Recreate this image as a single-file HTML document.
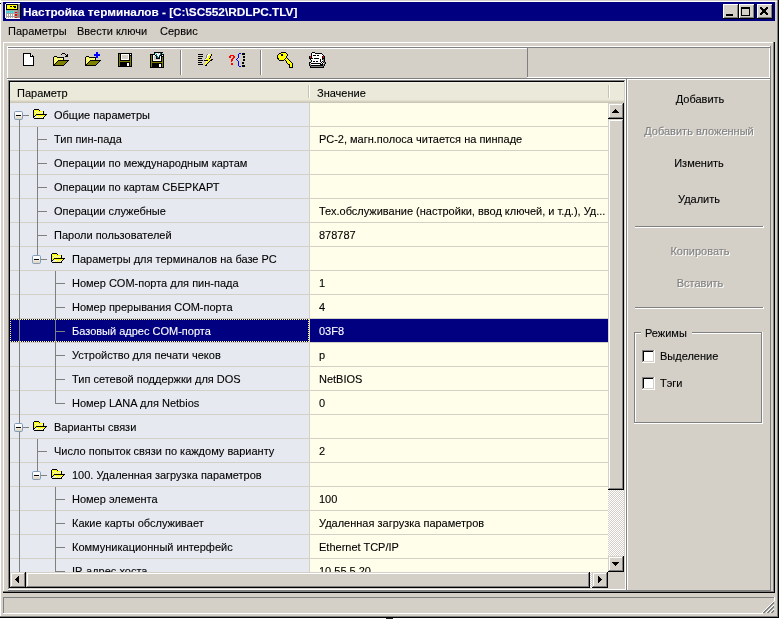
<!DOCTYPE html>
<html><head><meta charset="utf-8">
<style>
*{margin:0;padding:0;box-sizing:border-box}
html,body{width:781px;height:619px;overflow:hidden;background:#fff}
body{position:relative;font-family:"Liberation Sans",sans-serif;font-size:11px;color:#000;will-change:transform}
.a{position:absolute}
.t{position:absolute;white-space:nowrap;line-height:15px;font-size:11px;-webkit-text-stroke:0.1px currentColor}
svg{position:absolute;overflow:visible}
</style></head><body>

<div class="a" style="left:0px;top:0px;width:779px;height:618px;background:#d4d0c8;"></div>
<div class="a" style="left:0px;top:0px;width:1px;height:618px;background:#fff;"></div>
<div class="a" style="left:1px;top:1px;width:776px;height:1px;background:#fff;"></div>
<div class="a" style="left:777px;top:0px;width:1px;height:617px;background:#808080;"></div>
<div class="a" style="left:778px;top:0px;width:1px;height:618px;background:#000;"></div>
<div class="a" style="left:0px;top:616px;width:778px;height:1px;background:#808080;"></div>
<div class="a" style="left:0px;top:617px;width:779px;height:1px;background:#000;"></div>
<div class="a" style="left:3px;top:2px;width:772px;height:19px;background:#000080;"></div>
<svg style="left:5px;top:3px" width="16" height="16" shape-rendering="crispEdges"><rect x="1" y="0" width="14" height="1" fill="#ffffff"/><rect x="0" y="1" width="1" height="1" fill="#ffffff"/><rect x="1" y="1" width="12" height="1" fill="#000000"/><rect x="13" y="1" width="2" height="1" fill="#8c8c8c"/><rect x="15" y="1" width="1" height="1" fill="#000000"/><rect x="0" y="2" width="1" height="1" fill="#ffffff"/><rect x="1" y="2" width="1" height="1" fill="#000000"/><rect x="2" y="2" width="10" height="1" fill="#ffff00"/><rect x="12" y="2" width="1" height="1" fill="#000000"/><rect x="13" y="2" width="2" height="1" fill="#8c8c8c"/><rect x="15" y="2" width="1" height="1" fill="#000000"/><rect x="0" y="3" width="1" height="1" fill="#ffffff"/><rect x="1" y="3" width="1" height="1" fill="#000000"/><rect x="2" y="3" width="3" height="1" fill="#ffff00"/><rect x="5" y="3" width="2" height="1" fill="#000000"/><rect x="7" y="3" width="1" height="1" fill="#ffff00"/><rect x="8" y="3" width="3" height="1" fill="#000000"/><rect x="11" y="3" width="1" height="1" fill="#ffff00"/><rect x="12" y="3" width="1" height="1" fill="#000000"/><rect x="13" y="3" width="2" height="1" fill="#8c8c8c"/><rect x="15" y="3" width="1" height="1" fill="#000000"/><rect x="0" y="4" width="1" height="1" fill="#ffffff"/><rect x="1" y="4" width="1" height="1" fill="#000000"/><rect x="2" y="4" width="7" height="1" fill="#ffff00"/><rect x="9" y="4" width="2" height="1" fill="#000000"/><rect x="11" y="4" width="1" height="1" fill="#ffff00"/><rect x="12" y="4" width="1" height="1" fill="#000000"/><rect x="13" y="4" width="2" height="1" fill="#8c8c8c"/><rect x="15" y="4" width="1" height="1" fill="#000000"/><rect x="0" y="5" width="1" height="1" fill="#ffffff"/><rect x="1" y="5" width="1" height="1" fill="#000000"/><rect x="2" y="5" width="10" height="1" fill="#ffff00"/><rect x="12" y="5" width="1" height="1" fill="#000000"/><rect x="13" y="5" width="2" height="1" fill="#8c8c8c"/><rect x="15" y="5" width="1" height="1" fill="#000000"/><rect x="0" y="6" width="1" height="1" fill="#ffffff"/><rect x="1" y="6" width="12" height="1" fill="#000000"/><rect x="13" y="6" width="2" height="1" fill="#8c8c8c"/><rect x="15" y="6" width="1" height="1" fill="#000000"/><rect x="0" y="7" width="1" height="1" fill="#ffffff"/><rect x="1" y="7" width="11" height="1" fill="#a4a4a4"/><rect x="12" y="7" width="3" height="1" fill="#8c8c8c"/><rect x="15" y="7" width="1" height="1" fill="#000000"/><rect x="0" y="8" width="1" height="1" fill="#ffffff"/><rect x="1" y="8" width="1" height="1" fill="#a4a4a4"/><rect x="2" y="8" width="1" height="1" fill="#00ffff"/><rect x="3" y="8" width="1" height="1" fill="#a4a4a4"/><rect x="4" y="8" width="1" height="1" fill="#00ffff"/><rect x="5" y="8" width="1" height="1" fill="#a4a4a4"/><rect x="6" y="8" width="1" height="1" fill="#00ffff"/><rect x="7" y="8" width="1" height="1" fill="#a4a4a4"/><rect x="8" y="8" width="1" height="1" fill="#00ffff"/><rect x="9" y="8" width="3" height="1" fill="#a4a4a4"/><rect x="12" y="8" width="3" height="1" fill="#8c8c8c"/><rect x="15" y="8" width="1" height="1" fill="#000000"/><rect x="0" y="9" width="1" height="1" fill="#ffffff"/><rect x="1" y="9" width="1" height="1" fill="#a4a4a4"/><rect x="2" y="9" width="1" height="1" fill="#00ffff"/><rect x="3" y="9" width="1" height="1" fill="#a4a4a4"/><rect x="4" y="9" width="1" height="1" fill="#00ffff"/><rect x="5" y="9" width="1" height="1" fill="#a4a4a4"/><rect x="6" y="9" width="1" height="1" fill="#00ffff"/><rect x="7" y="9" width="1" height="1" fill="#a4a4a4"/><rect x="8" y="9" width="1" height="1" fill="#00ffff"/><rect x="9" y="9" width="1" height="1" fill="#a4a4a4"/><rect x="10" y="9" width="2" height="1" fill="#ff0000"/><rect x="12" y="9" width="3" height="1" fill="#8c8c8c"/><rect x="15" y="9" width="1" height="1" fill="#000000"/><rect x="0" y="10" width="1" height="1" fill="#ffffff"/><rect x="1" y="10" width="11" height="1" fill="#a4a4a4"/><rect x="12" y="10" width="3" height="1" fill="#8c8c8c"/><rect x="15" y="10" width="1" height="1" fill="#000000"/><rect x="0" y="11" width="1" height="1" fill="#ffffff"/><rect x="1" y="11" width="1" height="1" fill="#a4a4a4"/><rect x="2" y="11" width="1" height="1" fill="#ffffff"/><rect x="3" y="11" width="1" height="1" fill="#a4a4a4"/><rect x="4" y="11" width="1" height="1" fill="#ffffff"/><rect x="5" y="11" width="1" height="1" fill="#a4a4a4"/><rect x="6" y="11" width="1" height="1" fill="#ffffff"/><rect x="7" y="11" width="1" height="1" fill="#a4a4a4"/><rect x="8" y="11" width="1" height="1" fill="#ffffff"/><rect x="9" y="11" width="1" height="1" fill="#a4a4a4"/><rect x="10" y="11" width="2" height="1" fill="#ff0000"/><rect x="12" y="11" width="3" height="1" fill="#8c8c8c"/><rect x="15" y="11" width="1" height="1" fill="#000000"/><rect x="0" y="12" width="1" height="1" fill="#ffffff"/><rect x="1" y="12" width="1" height="1" fill="#a4a4a4"/><rect x="2" y="12" width="1" height="1" fill="#ffffff"/><rect x="3" y="12" width="1" height="1" fill="#a4a4a4"/><rect x="4" y="12" width="1" height="1" fill="#ffffff"/><rect x="5" y="12" width="1" height="1" fill="#a4a4a4"/><rect x="6" y="12" width="1" height="1" fill="#ffffff"/><rect x="7" y="12" width="1" height="1" fill="#a4a4a4"/><rect x="8" y="12" width="1" height="1" fill="#ffffff"/><rect x="9" y="12" width="1" height="1" fill="#a4a4a4"/><rect x="10" y="12" width="2" height="1" fill="#ff0000"/><rect x="12" y="12" width="3" height="1" fill="#8c8c8c"/><rect x="15" y="12" width="1" height="1" fill="#000000"/><rect x="0" y="13" width="1" height="1" fill="#ffffff"/><rect x="1" y="13" width="11" height="1" fill="#a4a4a4"/><rect x="12" y="13" width="3" height="1" fill="#8c8c8c"/><rect x="15" y="13" width="1" height="1" fill="#000000"/><rect x="0" y="14" width="1" height="1" fill="#ffffff"/><rect x="1" y="14" width="1" height="1" fill="#a4a4a4"/><rect x="2" y="14" width="1" height="1" fill="#ffffff"/><rect x="3" y="14" width="1" height="1" fill="#a4a4a4"/><rect x="4" y="14" width="1" height="1" fill="#ffffff"/><rect x="5" y="14" width="1" height="1" fill="#a4a4a4"/><rect x="6" y="14" width="1" height="1" fill="#ffffff"/><rect x="7" y="14" width="1" height="1" fill="#a4a4a4"/><rect x="8" y="14" width="1" height="1" fill="#ffffff"/><rect x="9" y="14" width="1" height="1" fill="#a4a4a4"/><rect x="10" y="14" width="2" height="1" fill="#ff0000"/><rect x="12" y="14" width="3" height="1" fill="#8c8c8c"/><rect x="15" y="14" width="1" height="1" fill="#000000"/><rect x="1" y="15" width="14" height="1" fill="#ffffff"/><rect x="15" y="15" width="1" height="1" fill="#000000"/></svg>
<div class="t" style="left:23px;top:5px;color:#fff;font-weight:bold;font-size:11.8px;">Настройка терминалов - [C:\SC552\RDLPC.TLV]</div>
<div class="a" style="left:723px;top:4px;width:16px;height:15px;background:#d4d0c8;"></div>
<div class="a" style="left:723px;top:4px;width:15px;height:1px;background:#fff;"></div>
<div class="a" style="left:723px;top:4px;width:1px;height:14px;background:#fff;"></div>
<div class="a" style="left:724px;top:5px;width:13px;height:1px;background:#d4d0c8;"></div>
<div class="a" style="left:724px;top:5px;width:1px;height:12px;background:#d4d0c8;"></div>
<div class="a" style="left:723px;top:18px;width:16px;height:1px;background:#000;"></div>
<div class="a" style="left:738px;top:4px;width:1px;height:15px;background:#000;"></div>
<div class="a" style="left:724px;top:17px;width:14px;height:1px;background:#808080;"></div>
<div class="a" style="left:737px;top:5px;width:1px;height:13px;background:#808080;"></div>
<div class="a" style="left:739px;top:4px;width:16px;height:15px;background:#d4d0c8;"></div>
<div class="a" style="left:739px;top:4px;width:15px;height:1px;background:#fff;"></div>
<div class="a" style="left:739px;top:4px;width:1px;height:14px;background:#fff;"></div>
<div class="a" style="left:740px;top:5px;width:13px;height:1px;background:#d4d0c8;"></div>
<div class="a" style="left:740px;top:5px;width:1px;height:12px;background:#d4d0c8;"></div>
<div class="a" style="left:739px;top:18px;width:16px;height:1px;background:#000;"></div>
<div class="a" style="left:754px;top:4px;width:1px;height:15px;background:#000;"></div>
<div class="a" style="left:740px;top:17px;width:14px;height:1px;background:#808080;"></div>
<div class="a" style="left:753px;top:5px;width:1px;height:13px;background:#808080;"></div>
<div class="a" style="left:757px;top:4px;width:16px;height:15px;background:#d4d0c8;"></div>
<div class="a" style="left:757px;top:4px;width:15px;height:1px;background:#fff;"></div>
<div class="a" style="left:757px;top:4px;width:1px;height:14px;background:#fff;"></div>
<div class="a" style="left:758px;top:5px;width:13px;height:1px;background:#d4d0c8;"></div>
<div class="a" style="left:758px;top:5px;width:1px;height:12px;background:#d4d0c8;"></div>
<div class="a" style="left:757px;top:18px;width:16px;height:1px;background:#000;"></div>
<div class="a" style="left:772px;top:4px;width:1px;height:15px;background:#000;"></div>
<div class="a" style="left:758px;top:17px;width:14px;height:1px;background:#808080;"></div>
<div class="a" style="left:771px;top:5px;width:1px;height:13px;background:#808080;"></div>
<div class="a" style="left:726px;top:14px;width:7px;height:2px;background:#000;"></div>
<div class="a" style="left:741px;top:7px;width:9px;height:9px;background:#000;"></div>
<div class="a" style="left:742px;top:9px;width:7px;height:6px;background:#d4d0c8;"></div>
<svg style="left:760px;top:7px" width="8" height="8" shape-rendering="crispEdges"><rect x="0" y="0" width="2" height="1" fill="#000000"/><rect x="6" y="0" width="2" height="1" fill="#000000"/><rect x="0" y="1" width="3" height="1" fill="#000000"/><rect x="5" y="1" width="3" height="1" fill="#000000"/><rect x="1" y="2" width="6" height="1" fill="#000000"/><rect x="2" y="3" width="4" height="1" fill="#000000"/><rect x="2" y="4" width="4" height="1" fill="#000000"/><rect x="1" y="5" width="6" height="1" fill="#000000"/><rect x="0" y="6" width="3" height="1" fill="#000000"/><rect x="5" y="6" width="3" height="1" fill="#000000"/><rect x="0" y="7" width="2" height="1" fill="#000000"/><rect x="6" y="7" width="2" height="1" fill="#000000"/></svg>
<div class="t" style="left:8px;top:24px;">Параметры</div>
<div class="t" style="left:77px;top:24px;">Ввести ключи</div>
<div class="t" style="left:160px;top:24px;">Сервис</div>
<div class="a" style="left:3px;top:42px;width:771px;height:1px;background:#fff;"></div>
<div class="a" style="left:3px;top:42px;width:1px;height:550px;background:#fff;"></div>
<div class="a" style="left:773px;top:42px;width:1px;height:550px;background:#808080;"></div>
<div class="a" style="left:774px;top:42px;width:1px;height:551px;background:#000;"></div>
<div class="a" style="left:3px;top:591px;width:771px;height:1px;background:#808080;"></div>
<div class="a" style="left:3px;top:592px;width:772px;height:1px;background:#000;"></div>
<div class="a" style="left:7px;top:46px;width:763px;height:1px;background:#fff;"></div>
<div class="a" style="left:7px;top:46px;width:1px;height:32px;background:#fff;"></div>
<div class="a" style="left:8px;top:47px;width:762px;height:1px;background:#808080;"></div>
<div class="a" style="left:8px;top:48px;width:519px;height:1px;background:#fff;"></div>
<div class="a" style="left:527px;top:48px;width:1px;height:29px;background:#808080;"></div>
<div class="a" style="left:527px;top:77px;width:243px;height:1px;background:#fff;"></div>
<div class="a" style="left:7px;top:78px;width:763px;height:1px;background:#808080;"></div>
<div class="a" style="left:7px;top:79px;width:763px;height:1px;background:#fff;"></div>
<div class="a" style="left:769px;top:48px;width:1px;height:30px;background:#fff;"></div>
<div class="a" style="left:770px;top:46px;width:1px;height:545px;background:#808080;"></div>
<div class="a" style="left:627px;top:79px;width:1px;height:511px;background:#fff;"></div>
<div class="a" style="left:626px;top:79px;width:1px;height:512px;background:#808080;"></div>
<div class="a" style="left:8px;top:590px;width:763px;height:1px;background:#808080;"></div>
<div class="a" style="left:3px;top:597px;width:771px;height:1px;background:#808080;"></div>
<div class="a" style="left:3px;top:597px;width:1px;height:17px;background:#808080;"></div>
<div class="a" style="left:774px;top:597px;width:1px;height:4px;background:#fff;"></div>
<div class="a" style="left:3px;top:613px;width:760px;height:1px;background:#fff;"></div>
<div class="a" style="left:8px;top:80px;width:618px;height:1px;background:#808080;"></div>
<div class="a" style="left:8px;top:80px;width:1px;height:510px;background:#808080;"></div>
<div class="a" style="left:9px;top:81px;width:616px;height:1px;background:#000;"></div>
<div class="a" style="left:9px;top:81px;width:1px;height:508px;background:#000;"></div>
<div class="a" style="left:624px;top:81px;width:1px;height:508px;background:#d4d0c8;"></div>
<div class="a" style="left:9px;top:588px;width:616px;height:1px;background:#d4d0c8;"></div>
<div class="a" style="left:625px;top:80px;width:1px;height:510px;background:#fff;"></div>
<div class="a" style="left:8px;top:589px;width:618px;height:1px;background:#fff;"></div>
<div class="a" style="left:10px;top:82px;width:614px;height:21px;background:#ebe9da;"></div>
<div class="a" style="left:10px;top:82px;width:614px;height:1px;background:#f3f1e8;"></div>
<div class="a" style="left:10px;top:100px;width:614px;height:1px;background:#e2decd;"></div>
<div class="a" style="left:10px;top:101px;width:614px;height:1px;background:#d6d2c2;"></div>
<div class="a" style="left:10px;top:102px;width:614px;height:1px;background:#cbc7b8;"></div>
<div class="a" style="left:308px;top:85px;width:1px;height:13px;background:#c5c3b0;"></div>
<div class="a" style="left:309px;top:85px;width:1px;height:13px;background:#fff;"></div>
<div class="a" style="left:608px;top:85px;width:1px;height:13px;background:#c5c3b0;"></div>
<div class="a" style="left:609px;top:85px;width:1px;height:13px;background:#fff;"></div>
<div class="t" style="left:17px;top:86px;">Параметр</div>
<div class="t" style="left:317px;top:86px;">Значение</div>
<div class="a" style="left:10px;top:103px;width:299px;height:485px;background:#e6eaf0;"></div>
<div class="a" style="left:309px;top:103px;width:1px;height:485px;background:#d4d0c8;"></div>
<div class="a" style="left:310px;top:103px;width:298px;height:485px;background:#fffeea;"></div>
<div class="a" style="left:10px;top:103px;width:598px;height:469px;overflow:hidden">
<div class="a" style="left:0px;top:23px;width:598px;height:1px;background:#d4d0c8;"></div>
<div class="a" style="left:0px;top:47px;width:598px;height:1px;background:#d4d0c8;"></div>
<div class="a" style="left:0px;top:71px;width:598px;height:1px;background:#d4d0c8;"></div>
<div class="a" style="left:0px;top:95px;width:598px;height:1px;background:#d4d0c8;"></div>
<div class="a" style="left:0px;top:119px;width:598px;height:1px;background:#d4d0c8;"></div>
<div class="a" style="left:0px;top:143px;width:598px;height:1px;background:#d4d0c8;"></div>
<div class="a" style="left:0px;top:167px;width:598px;height:1px;background:#d4d0c8;"></div>
<div class="a" style="left:0px;top:191px;width:598px;height:1px;background:#d4d0c8;"></div>
<div class="a" style="left:0px;top:215px;width:598px;height:1px;background:#d4d0c8;"></div>
<div class="a" style="left:0px;top:239px;width:598px;height:1px;background:#d4d0c8;"></div>
<div class="a" style="left:0px;top:216px;width:299px;height:23px;background:#000080;"></div>
<div class="a" style="left:300px;top:216px;width:298px;height:23px;background:#000080;"></div>
<div class="a" style="left:0px;top:216px;width:299px;height:23px;border:1px dotted #ffff80"></div>
<div class="a" style="left:0px;top:263px;width:598px;height:1px;background:#d4d0c8;"></div>
<div class="a" style="left:0px;top:287px;width:598px;height:1px;background:#d4d0c8;"></div>
<div class="a" style="left:0px;top:311px;width:598px;height:1px;background:#d4d0c8;"></div>
<div class="a" style="left:0px;top:335px;width:598px;height:1px;background:#d4d0c8;"></div>
<div class="a" style="left:0px;top:359px;width:598px;height:1px;background:#d4d0c8;"></div>
<div class="a" style="left:0px;top:383px;width:598px;height:1px;background:#d4d0c8;"></div>
<div class="a" style="left:0px;top:407px;width:598px;height:1px;background:#d4d0c8;"></div>
<div class="a" style="left:0px;top:431px;width:598px;height:1px;background:#d4d0c8;"></div>
<div class="a" style="left:0px;top:455px;width:598px;height:1px;background:#d4d0c8;"></div>
<div class="a" style="left:0px;top:479px;width:598px;height:1px;background:#d4d0c8;"></div>
<div class="a" style="left:9px;top:17px;width:1px;height:481px;background:#808080;"></div>
<div class="a" style="left:27px;top:24px;width:1px;height:128px;background:#808080;"></div>
<div class="a" style="left:45px;top:168px;width:1px;height:133px;background:#808080;"></div>
<div class="a" style="left:27px;top:336px;width:1px;height:32px;background:#808080;"></div>
<div class="a" style="left:45px;top:384px;width:1px;height:114px;background:#808080;"></div>
<div class="a" style="left:13px;top:12px;width:6px;height:1px;background:#808080;"></div>
<svg style="left:4px;top:8px" width="9" height="9"><defs><linearGradient id="g0" x1="0" y1="0" x2="0" y2="1"><stop offset="0.3" stop-color="#fff"/><stop offset="1" stop-color="#d9ccb4"/></linearGradient></defs><rect x="0.5" y="0.5" width="8" height="8" rx="1.2" fill="url(#g0)" stroke="#7f9db9"/><rect x="2" y="4" width="5" height="1" fill="#000"/></svg>
<svg style="left:23px;top:6px" width="14" height="10" shape-rendering="crispEdges"><path d="M1 0h5v1h-5z M0 1h1v8h-1z M6 1h1v1h-1z M7 2h4v1h-4z M10 3h1v2h-1z M3 5h11v1h-11z M13 6h-1v0z" fill="#000"/><path d="M1 1h5v1h4v3h-7v1h-1v1h-1z" fill="#ffff00"/><path d="M3 6h10v-0l-1 1v0l-1 1v1h-8v-0l1-1z" fill="#ffff00"/><path d="M2 6h1v1h-1z M1 7h1v1h-1z M12 6h1v1h-1z M11 7h1v1h-1z M10 8h1v1h-1z M1 9h10v1h-10z" fill="#000"/><path d="M2 2h1v1h-1z M4 2h1v1h-1z M3 3h1v1h-1z M5 3h1v1h-1z M7 3h1v1h-1z M9 3h1v1h-1z M2 4h1v1h-1z M4 4h1v1h-1z M6 4h1v1h-1z M8 4h1v1h-1z M4 7h1v1h-1z M6 7h1v1h-1z M8 7h1v1h-1z M10 7h1v1h-1z M3 8h1v1h-1z M5 8h1v1h-1z M7 8h1v1h-1z M9 8h1v1h-1z" fill="#fff"/></svg>
<div class="t" style="left:44px;top:5px;color:#000">Общие параметры</div>
<div class="a" style="left:27px;top:36px;width:10px;height:1px;background:#808080;"></div>
<div class="t" style="left:44px;top:29px;color:#000">Тип пин-пада</div>
<div class="t" style="left:309px;top:29px;color:#000">РС-2, магн.полоса читается на пинпаде</div>
<div class="a" style="left:27px;top:60px;width:10px;height:1px;background:#808080;"></div>
<div class="t" style="left:44px;top:53px;color:#000">Операции по международным картам</div>
<div class="a" style="left:27px;top:84px;width:10px;height:1px;background:#808080;"></div>
<div class="t" style="left:44px;top:77px;color:#000">Операции по картам СБЕРКАРТ</div>
<div class="a" style="left:27px;top:108px;width:10px;height:1px;background:#808080;"></div>
<div class="t" style="left:44px;top:101px;color:#000">Операции служебные</div>
<div class="t" style="left:309px;top:101px;color:#000">Тех.обслуживание (настройки, ввод ключей, и т.д.), Уд...</div>
<div class="a" style="left:27px;top:132px;width:10px;height:1px;background:#808080;"></div>
<div class="t" style="left:44px;top:125px;color:#000">Пароли пользователей</div>
<div class="t" style="left:309px;top:125px;color:#000">878787</div>
<div class="a" style="left:31px;top:156px;width:6px;height:1px;background:#808080;"></div>
<svg style="left:22px;top:152px" width="9" height="9"><defs><linearGradient id="g6" x1="0" y1="0" x2="0" y2="1"><stop offset="0.3" stop-color="#fff"/><stop offset="1" stop-color="#d9ccb4"/></linearGradient></defs><rect x="0.5" y="0.5" width="8" height="8" rx="1.2" fill="url(#g6)" stroke="#7f9db9"/><rect x="2" y="4" width="5" height="1" fill="#000"/></svg>
<svg style="left:41px;top:150px" width="14" height="10" shape-rendering="crispEdges"><path d="M1 0h5v1h-5z M0 1h1v8h-1z M6 1h1v1h-1z M7 2h4v1h-4z M10 3h1v2h-1z M3 5h11v1h-11z M13 6h-1v0z" fill="#000"/><path d="M1 1h5v1h4v3h-7v1h-1v1h-1z" fill="#ffff00"/><path d="M3 6h10v-0l-1 1v0l-1 1v1h-8v-0l1-1z" fill="#ffff00"/><path d="M2 6h1v1h-1z M1 7h1v1h-1z M12 6h1v1h-1z M11 7h1v1h-1z M10 8h1v1h-1z M1 9h10v1h-10z" fill="#000"/><path d="M2 2h1v1h-1z M4 2h1v1h-1z M3 3h1v1h-1z M5 3h1v1h-1z M7 3h1v1h-1z M9 3h1v1h-1z M2 4h1v1h-1z M4 4h1v1h-1z M6 4h1v1h-1z M8 4h1v1h-1z M4 7h1v1h-1z M6 7h1v1h-1z M8 7h1v1h-1z M10 7h1v1h-1z M3 8h1v1h-1z M5 8h1v1h-1z M7 8h1v1h-1z M9 8h1v1h-1z" fill="#fff"/></svg>
<div class="t" style="left:62px;top:149px;color:#000">Параметры для терминалов на базе PC</div>
<div class="a" style="left:45px;top:180px;width:10px;height:1px;background:#808080;"></div>
<div class="t" style="left:62px;top:173px;color:#000">Номер COM-порта для пин-пада</div>
<div class="t" style="left:309px;top:173px;color:#000">1</div>
<div class="a" style="left:45px;top:204px;width:10px;height:1px;background:#808080;"></div>
<div class="t" style="left:62px;top:197px;color:#000">Номер прерывания COM-порта</div>
<div class="t" style="left:309px;top:197px;color:#000">4</div>
<div class="a" style="left:45px;top:228px;width:10px;height:1px;background:#808080;"></div>
<div class="t" style="left:62px;top:221px;color:#fff">Базовый адрес COM-порта</div>
<div class="t" style="left:309px;top:221px;color:#fff">03F8</div>
<div class="a" style="left:45px;top:252px;width:10px;height:1px;background:#808080;"></div>
<div class="t" style="left:62px;top:245px;color:#000">Устройство для печати чеков</div>
<div class="t" style="left:309px;top:245px;color:#000">p</div>
<div class="a" style="left:45px;top:276px;width:10px;height:1px;background:#808080;"></div>
<div class="t" style="left:62px;top:269px;color:#000">Тип сетевой поддержки для DOS</div>
<div class="t" style="left:309px;top:269px;color:#000">NetBIOS</div>
<div class="a" style="left:45px;top:300px;width:10px;height:1px;background:#808080;"></div>
<div class="t" style="left:62px;top:293px;color:#000">Номер LANA для Netbios</div>
<div class="t" style="left:309px;top:293px;color:#000">0</div>
<div class="a" style="left:13px;top:324px;width:6px;height:1px;background:#808080;"></div>
<svg style="left:4px;top:320px" width="9" height="9"><defs><linearGradient id="g13" x1="0" y1="0" x2="0" y2="1"><stop offset="0.3" stop-color="#fff"/><stop offset="1" stop-color="#d9ccb4"/></linearGradient></defs><rect x="0.5" y="0.5" width="8" height="8" rx="1.2" fill="url(#g13)" stroke="#7f9db9"/><rect x="2" y="4" width="5" height="1" fill="#000"/></svg>
<svg style="left:23px;top:318px" width="14" height="10" shape-rendering="crispEdges"><path d="M1 0h5v1h-5z M0 1h1v8h-1z M6 1h1v1h-1z M7 2h4v1h-4z M10 3h1v2h-1z M3 5h11v1h-11z M13 6h-1v0z" fill="#000"/><path d="M1 1h5v1h4v3h-7v1h-1v1h-1z" fill="#ffff00"/><path d="M3 6h10v-0l-1 1v0l-1 1v1h-8v-0l1-1z" fill="#ffff00"/><path d="M2 6h1v1h-1z M1 7h1v1h-1z M12 6h1v1h-1z M11 7h1v1h-1z M10 8h1v1h-1z M1 9h10v1h-10z" fill="#000"/><path d="M2 2h1v1h-1z M4 2h1v1h-1z M3 3h1v1h-1z M5 3h1v1h-1z M7 3h1v1h-1z M9 3h1v1h-1z M2 4h1v1h-1z M4 4h1v1h-1z M6 4h1v1h-1z M8 4h1v1h-1z M4 7h1v1h-1z M6 7h1v1h-1z M8 7h1v1h-1z M10 7h1v1h-1z M3 8h1v1h-1z M5 8h1v1h-1z M7 8h1v1h-1z M9 8h1v1h-1z" fill="#fff"/></svg>
<div class="t" style="left:44px;top:317px;color:#000">Варианты связи</div>
<div class="a" style="left:27px;top:348px;width:10px;height:1px;background:#808080;"></div>
<div class="t" style="left:44px;top:341px;color:#000">Число попыток связи по каждому варианту</div>
<div class="t" style="left:309px;top:341px;color:#000">2</div>
<div class="a" style="left:31px;top:372px;width:6px;height:1px;background:#808080;"></div>
<svg style="left:22px;top:368px" width="9" height="9"><defs><linearGradient id="g15" x1="0" y1="0" x2="0" y2="1"><stop offset="0.3" stop-color="#fff"/><stop offset="1" stop-color="#d9ccb4"/></linearGradient></defs><rect x="0.5" y="0.5" width="8" height="8" rx="1.2" fill="url(#g15)" stroke="#7f9db9"/><rect x="2" y="4" width="5" height="1" fill="#000"/></svg>
<svg style="left:41px;top:366px" width="14" height="10" shape-rendering="crispEdges"><path d="M1 0h5v1h-5z M0 1h1v8h-1z M6 1h1v1h-1z M7 2h4v1h-4z M10 3h1v2h-1z M3 5h11v1h-11z M13 6h-1v0z" fill="#000"/><path d="M1 1h5v1h4v3h-7v1h-1v1h-1z" fill="#ffff00"/><path d="M3 6h10v-0l-1 1v0l-1 1v1h-8v-0l1-1z" fill="#ffff00"/><path d="M2 6h1v1h-1z M1 7h1v1h-1z M12 6h1v1h-1z M11 7h1v1h-1z M10 8h1v1h-1z M1 9h10v1h-10z" fill="#000"/><path d="M2 2h1v1h-1z M4 2h1v1h-1z M3 3h1v1h-1z M5 3h1v1h-1z M7 3h1v1h-1z M9 3h1v1h-1z M2 4h1v1h-1z M4 4h1v1h-1z M6 4h1v1h-1z M8 4h1v1h-1z M4 7h1v1h-1z M6 7h1v1h-1z M8 7h1v1h-1z M10 7h1v1h-1z M3 8h1v1h-1z M5 8h1v1h-1z M7 8h1v1h-1z M9 8h1v1h-1z" fill="#fff"/></svg>
<div class="t" style="left:62px;top:365px;color:#000">100. Удаленная загрузка параметров</div>
<div class="a" style="left:45px;top:396px;width:10px;height:1px;background:#808080;"></div>
<div class="t" style="left:62px;top:389px;color:#000">Номер элемента</div>
<div class="t" style="left:309px;top:389px;color:#000">100</div>
<div class="a" style="left:45px;top:420px;width:10px;height:1px;background:#808080;"></div>
<div class="t" style="left:62px;top:413px;color:#000">Какие карты обслуживает</div>
<div class="t" style="left:309px;top:413px;color:#000">Удаленная загрузка параметров</div>
<div class="a" style="left:45px;top:444px;width:10px;height:1px;background:#808080;"></div>
<div class="t" style="left:62px;top:437px;color:#000">Коммуникационный интерфейс</div>
<div class="t" style="left:309px;top:437px;color:#000">Ethernet TCP/IP</div>
<div class="a" style="left:45px;top:468px;width:10px;height:1px;background:#808080;"></div>
<div class="t" style="left:62px;top:461px;color:#000">IP-адрес хоста</div>
<div class="t" style="left:309px;top:461px;color:#000">10.55.5.20</div>
</div>
<div class="a" style="left:608px;top:103px;width:16px;height:16px;background:#d4d0c8;"></div>
<div class="a" style="left:608px;top:103px;width:15px;height:1px;background:#d4d0c8;"></div>
<div class="a" style="left:608px;top:103px;width:1px;height:15px;background:#d4d0c8;"></div>
<div class="a" style="left:609px;top:104px;width:13px;height:1px;background:#fff;"></div>
<div class="a" style="left:609px;top:104px;width:1px;height:13px;background:#fff;"></div>
<div class="a" style="left:608px;top:118px;width:16px;height:1px;background:#000;"></div>
<div class="a" style="left:623px;top:103px;width:1px;height:16px;background:#000;"></div>
<div class="a" style="left:609px;top:117px;width:14px;height:1px;background:#808080;"></div>
<div class="a" style="left:622px;top:104px;width:1px;height:14px;background:#808080;"></div>
<svg style="left:612px;top:109px" width="7" height="4" shape-rendering="crispEdges"><path d="M3 0h1v1h1v1h1v1h1v1h-7v-1h1v-1h1v-1h1z" fill="#000"/></svg>
<div class="a" style="left:608px;top:119px;width:16px;height:371px;background:#d4d0c8;"></div>
<div class="a" style="left:608px;top:119px;width:15px;height:1px;background:#d4d0c8;"></div>
<div class="a" style="left:608px;top:119px;width:1px;height:370px;background:#d4d0c8;"></div>
<div class="a" style="left:609px;top:120px;width:13px;height:1px;background:#fff;"></div>
<div class="a" style="left:609px;top:120px;width:1px;height:368px;background:#fff;"></div>
<div class="a" style="left:608px;top:489px;width:16px;height:1px;background:#000;"></div>
<div class="a" style="left:623px;top:119px;width:1px;height:371px;background:#000;"></div>
<div class="a" style="left:609px;top:488px;width:14px;height:1px;background:#808080;"></div>
<div class="a" style="left:622px;top:120px;width:1px;height:369px;background:#808080;"></div>
<div class="a" style="left:608px;top:490px;width:16px;height:66px;background-color:#fff;background-image:linear-gradient(45deg,#d4d0c8 25%,transparent 25%,transparent 75%,#d4d0c8 75%),linear-gradient(45deg,#d4d0c8 25%,transparent 25%,transparent 75%,#d4d0c8 75%);background-size:2px 2px;background-position:0 0,1px 1px"></div>
<div class="a" style="left:608px;top:556px;width:16px;height:16px;background:#d4d0c8;"></div>
<div class="a" style="left:608px;top:556px;width:15px;height:1px;background:#d4d0c8;"></div>
<div class="a" style="left:608px;top:556px;width:1px;height:15px;background:#d4d0c8;"></div>
<div class="a" style="left:609px;top:557px;width:13px;height:1px;background:#fff;"></div>
<div class="a" style="left:609px;top:557px;width:1px;height:13px;background:#fff;"></div>
<div class="a" style="left:608px;top:571px;width:16px;height:1px;background:#000;"></div>
<div class="a" style="left:623px;top:556px;width:1px;height:16px;background:#000;"></div>
<div class="a" style="left:609px;top:570px;width:14px;height:1px;background:#808080;"></div>
<div class="a" style="left:622px;top:557px;width:1px;height:14px;background:#808080;"></div>
<svg style="left:612px;top:562px" width="7" height="4" shape-rendering="crispEdges"><path d="M0 0h7v1h-1v1h-1v1h-1v1h-1v-1h-1v-1h-1v-1h-1z" fill="#000"/></svg>
<div class="a" style="left:10px;top:572px;width:598px;height:16px;background-color:#fff;background-image:linear-gradient(45deg,#d4d0c8 25%,transparent 25%,transparent 75%,#d4d0c8 75%),linear-gradient(45deg,#d4d0c8 25%,transparent 25%,transparent 75%,#d4d0c8 75%);background-size:2px 2px;background-position:0 0,1px 1px"></div>
<div class="a" style="left:10px;top:572px;width:16px;height:16px;background:#d4d0c8;"></div>
<div class="a" style="left:10px;top:572px;width:15px;height:1px;background:#d4d0c8;"></div>
<div class="a" style="left:10px;top:572px;width:1px;height:15px;background:#d4d0c8;"></div>
<div class="a" style="left:11px;top:573px;width:13px;height:1px;background:#fff;"></div>
<div class="a" style="left:11px;top:573px;width:1px;height:13px;background:#fff;"></div>
<div class="a" style="left:10px;top:587px;width:16px;height:1px;background:#000;"></div>
<div class="a" style="left:25px;top:572px;width:1px;height:16px;background:#000;"></div>
<div class="a" style="left:11px;top:586px;width:14px;height:1px;background:#808080;"></div>
<div class="a" style="left:24px;top:573px;width:1px;height:14px;background:#808080;"></div>
<svg style="left:15px;top:576px" width="4" height="7" shape-rendering="crispEdges"><path d="M3 0h1v7h-1v-1h-1v-1h-1v-1h-1v-1h1v-1h1v-1h1z" fill="#000"/></svg>
<div class="a" style="left:26px;top:572px;width:564px;height:16px;background:#d4d0c8;"></div>
<div class="a" style="left:26px;top:572px;width:563px;height:1px;background:#d4d0c8;"></div>
<div class="a" style="left:26px;top:572px;width:1px;height:15px;background:#d4d0c8;"></div>
<div class="a" style="left:27px;top:573px;width:561px;height:1px;background:#fff;"></div>
<div class="a" style="left:27px;top:573px;width:1px;height:13px;background:#fff;"></div>
<div class="a" style="left:26px;top:587px;width:564px;height:1px;background:#000;"></div>
<div class="a" style="left:589px;top:572px;width:1px;height:16px;background:#000;"></div>
<div class="a" style="left:27px;top:586px;width:562px;height:1px;background:#808080;"></div>
<div class="a" style="left:588px;top:573px;width:1px;height:14px;background:#808080;"></div>
<div class="a" style="left:592px;top:572px;width:16px;height:16px;background:#d4d0c8;"></div>
<div class="a" style="left:592px;top:572px;width:15px;height:1px;background:#d4d0c8;"></div>
<div class="a" style="left:592px;top:572px;width:1px;height:15px;background:#d4d0c8;"></div>
<div class="a" style="left:593px;top:573px;width:13px;height:1px;background:#fff;"></div>
<div class="a" style="left:593px;top:573px;width:1px;height:13px;background:#fff;"></div>
<div class="a" style="left:592px;top:587px;width:16px;height:1px;background:#000;"></div>
<div class="a" style="left:607px;top:572px;width:1px;height:16px;background:#000;"></div>
<div class="a" style="left:593px;top:586px;width:14px;height:1px;background:#808080;"></div>
<div class="a" style="left:606px;top:573px;width:1px;height:14px;background:#808080;"></div>
<svg style="left:598px;top:576px" width="4" height="7" shape-rendering="crispEdges"><path d="M0 0h1v1h1v1h1v1h1v1h-1v1h-1v1h-1v1h-1z" fill="#000"/></svg>
<div class="a" style="left:608px;top:572px;width:16px;height:16px;background:#d4d0c8;"></div>
<div class="t" style="left:600px;top:92px;width:200px;text-align:center">Добавить</div>
<div class="t" style="left:600px;top:125px;width:200px;text-align:center;color:#fff">Добавить вложенный</div>
<div class="t" style="left:599px;top:124px;width:200px;text-align:center;color:#808080">Добавить вложенный</div>
<div class="t" style="left:599px;top:156px;width:200px;text-align:center">Изменить</div>
<div class="t" style="left:599px;top:192px;width:200px;text-align:center">Удалить</div>
<div class="a" style="left:635px;top:226px;width:128px;height:1px;background:#808080;"></div>
<div class="a" style="left:635px;top:227px;width:129px;height:1px;background:#fff;"></div>
<div class="a" style="left:763px;top:226px;width:1px;height:1px;background:#fff;"></div>
<div class="t" style="left:601px;top:245px;width:200px;text-align:center;color:#fff">Копировать</div>
<div class="t" style="left:600px;top:244px;width:200px;text-align:center;color:#808080">Копировать</div>
<div class="t" style="left:601px;top:277px;width:200px;text-align:center;color:#fff">Вставить</div>
<div class="t" style="left:600px;top:276px;width:200px;text-align:center;color:#808080">Вставить</div>
<div class="a" style="left:635px;top:307px;width:128px;height:1px;background:#808080;"></div>
<div class="a" style="left:635px;top:308px;width:129px;height:1px;background:#fff;"></div>
<div class="a" style="left:763px;top:307px;width:1px;height:1px;background:#fff;"></div>
<div class="a" style="left:634px;top:332px;width:128px;height:1px;background:#808080;"></div>
<div class="a" style="left:634px;top:332px;width:1px;height:91px;background:#808080;"></div>
<div class="a" style="left:635px;top:333px;width:126px;height:1px;background:#fff;"></div>
<div class="a" style="left:635px;top:333px;width:1px;height:89px;background:#fff;"></div>
<div class="a" style="left:761px;top:332px;width:1px;height:90px;background:#808080;"></div>
<div class="a" style="left:634px;top:422px;width:128px;height:1px;background:#808080;"></div>
<div class="a" style="left:762px;top:332px;width:1px;height:91px;background:#fff;"></div>
<div class="a" style="left:634px;top:423px;width:129px;height:1px;background:#fff;"></div>
<div class="a" style="left:641px;top:327px;width:51px;height:12px;background:#d4d0c8;"></div>
<div class="t" style="left:645px;top:326px;">Режимы</div>
<div class="a" style="left:642px;top:350px;width:13px;height:13px;background:#fff;"></div>
<div class="a" style="left:642px;top:350px;width:12px;height:1px;background:#808080;"></div>
<div class="a" style="left:642px;top:350px;width:1px;height:12px;background:#808080;"></div>
<div class="a" style="left:643px;top:351px;width:10px;height:1px;background:#000;"></div>
<div class="a" style="left:643px;top:351px;width:1px;height:10px;background:#000;"></div>
<div class="a" style="left:643px;top:361px;width:11px;height:1px;background:#d4d0c8;"></div>
<div class="a" style="left:653px;top:351px;width:1px;height:11px;background:#d4d0c8;"></div>
<div class="t" style="left:660px;top:349px;">Выделение</div>
<div class="a" style="left:642px;top:377px;width:13px;height:13px;background:#fff;"></div>
<div class="a" style="left:642px;top:377px;width:12px;height:1px;background:#808080;"></div>
<div class="a" style="left:642px;top:377px;width:1px;height:12px;background:#808080;"></div>
<div class="a" style="left:643px;top:378px;width:10px;height:1px;background:#000;"></div>
<div class="a" style="left:643px;top:378px;width:1px;height:10px;background:#000;"></div>
<div class="a" style="left:643px;top:388px;width:11px;height:1px;background:#d4d0c8;"></div>
<div class="a" style="left:653px;top:378px;width:1px;height:11px;background:#d4d0c8;"></div>
<div class="t" style="left:660px;top:376px;">Тэги</div>
<svg style="left:23px;top:53px" width="11" height="13" shape-rendering="crispEdges"><rect x="0" y="0" width="8" height="1" fill="#000000"/><rect x="0" y="1" width="1" height="1" fill="#000000"/><rect x="1" y="1" width="6" height="1" fill="#ffffff"/><rect x="7" y="1" width="1" height="1" fill="#000000"/><rect x="0" y="2" width="1" height="1" fill="#000000"/><rect x="1" y="2" width="6" height="1" fill="#ffffff"/><rect x="7" y="2" width="1" height="1" fill="#000000"/><rect x="8" y="2" width="1" height="1" fill="#ffffff"/><rect x="9" y="2" width="1" height="1" fill="#000000"/><rect x="0" y="3" width="1" height="1" fill="#000000"/><rect x="1" y="3" width="6" height="1" fill="#ffffff"/><rect x="7" y="3" width="4" height="1" fill="#000000"/><rect x="0" y="4" width="1" height="1" fill="#000000"/><rect x="1" y="4" width="9" height="1" fill="#ffffff"/><rect x="10" y="4" width="1" height="1" fill="#000000"/><rect x="0" y="5" width="1" height="1" fill="#000000"/><rect x="1" y="5" width="9" height="1" fill="#ffffff"/><rect x="10" y="5" width="1" height="1" fill="#000000"/><rect x="0" y="6" width="1" height="1" fill="#000000"/><rect x="1" y="6" width="9" height="1" fill="#ffffff"/><rect x="10" y="6" width="1" height="1" fill="#000000"/><rect x="0" y="7" width="1" height="1" fill="#000000"/><rect x="1" y="7" width="9" height="1" fill="#ffffff"/><rect x="10" y="7" width="1" height="1" fill="#000000"/><rect x="0" y="8" width="1" height="1" fill="#000000"/><rect x="1" y="8" width="9" height="1" fill="#ffffff"/><rect x="10" y="8" width="1" height="1" fill="#000000"/><rect x="0" y="9" width="1" height="1" fill="#000000"/><rect x="1" y="9" width="9" height="1" fill="#ffffff"/><rect x="10" y="9" width="1" height="1" fill="#000000"/><rect x="0" y="10" width="1" height="1" fill="#000000"/><rect x="1" y="10" width="9" height="1" fill="#ffffff"/><rect x="10" y="10" width="1" height="1" fill="#000000"/><rect x="0" y="11" width="1" height="1" fill="#000000"/><rect x="1" y="11" width="9" height="1" fill="#ffffff"/><rect x="10" y="11" width="1" height="1" fill="#000000"/><rect x="0" y="12" width="11" height="1" fill="#000000"/></svg>
<svg style="left:51px;top:56px" width="18" height="10" shape-rendering="crispEdges"><rect x="3" y="0" width="3" height="1" fill="#000000"/><rect x="2" y="1" width="1" height="1" fill="#000000"/><rect x="3" y="1" width="1" height="1" fill="#ffff00"/><rect x="4" y="1" width="1" height="1" fill="#ffffff"/><rect x="5" y="1" width="1" height="1" fill="#ffff00"/><rect x="6" y="1" width="7" height="1" fill="#000000"/><rect x="2" y="2" width="1" height="1" fill="#000000"/><rect x="3" y="2" width="1" height="1" fill="#ffffff"/><rect x="4" y="2" width="1" height="1" fill="#ffff00"/><rect x="5" y="2" width="1" height="1" fill="#ffffff"/><rect x="6" y="2" width="1" height="1" fill="#ffff00"/><rect x="7" y="2" width="1" height="1" fill="#ffffff"/><rect x="8" y="2" width="1" height="1" fill="#ffff00"/><rect x="9" y="2" width="1" height="1" fill="#ffffff"/><rect x="10" y="2" width="1" height="1" fill="#ffff00"/><rect x="11" y="2" width="1" height="1" fill="#ffffff"/><rect x="12" y="2" width="1" height="1" fill="#000000"/><rect x="2" y="3" width="1" height="1" fill="#000000"/><rect x="3" y="3" width="1" height="1" fill="#ffff00"/><rect x="4" y="3" width="1" height="1" fill="#ffffff"/><rect x="5" y="3" width="1" height="1" fill="#ffff00"/><rect x="6" y="3" width="1" height="1" fill="#ffffff"/><rect x="7" y="3" width="1" height="1" fill="#ffff00"/><rect x="8" y="3" width="1" height="1" fill="#ffffff"/><rect x="9" y="3" width="1" height="1" fill="#ffff00"/><rect x="10" y="3" width="1" height="1" fill="#ffffff"/><rect x="11" y="3" width="1" height="1" fill="#ffff00"/><rect x="12" y="3" width="1" height="1" fill="#000000"/><rect x="2" y="4" width="1" height="1" fill="#000000"/><rect x="3" y="4" width="1" height="1" fill="#ffffff"/><rect x="4" y="4" width="1" height="1" fill="#ffff00"/><rect x="5" y="4" width="1" height="1" fill="#ffffff"/><rect x="6" y="4" width="1" height="1" fill="#ffff00"/><rect x="7" y="4" width="11" height="1" fill="#000000"/><rect x="2" y="5" width="1" height="1" fill="#000000"/><rect x="3" y="5" width="1" height="1" fill="#ffff00"/><rect x="4" y="5" width="1" height="1" fill="#ffffff"/><rect x="5" y="5" width="1" height="1" fill="#ffff00"/><rect x="6" y="5" width="1" height="1" fill="#000000"/><rect x="7" y="5" width="9" height="1" fill="#808000"/><rect x="16" y="5" width="1" height="1" fill="#000000"/><rect x="2" y="6" width="1" height="1" fill="#000000"/><rect x="3" y="6" width="1" height="1" fill="#ffffff"/><rect x="4" y="6" width="1" height="1" fill="#ffff00"/><rect x="5" y="6" width="1" height="1" fill="#000000"/><rect x="6" y="6" width="9" height="1" fill="#808000"/><rect x="15" y="6" width="1" height="1" fill="#000000"/><rect x="2" y="7" width="1" height="1" fill="#000000"/><rect x="3" y="7" width="1" height="1" fill="#ffff00"/><rect x="4" y="7" width="1" height="1" fill="#000000"/><rect x="5" y="7" width="9" height="1" fill="#808000"/><rect x="14" y="7" width="1" height="1" fill="#000000"/><rect x="2" y="8" width="2" height="1" fill="#000000"/><rect x="4" y="8" width="9" height="1" fill="#808000"/><rect x="13" y="8" width="1" height="1" fill="#000000"/><rect x="2" y="9" width="11" height="1" fill="#000000"/></svg>
<svg style="left:51px;top:53px" width="18" height="4" shape-rendering="crispEdges"><rect x="11" y="0" width="3" height="1" fill="#000000"/><rect x="10" y="1" width="1" height="1" fill="#000000"/><rect x="14" y="1" width="1" height="1" fill="#000000"/><rect x="16" y="1" width="1" height="1" fill="#000000"/><rect x="15" y="2" width="2" height="1" fill="#000000"/><rect x="14" y="3" width="3" height="1" fill="#000000"/></svg>
<svg style="left:83px;top:56px" width="18" height="10" shape-rendering="crispEdges"><rect x="3" y="0" width="3" height="1" fill="#000000"/><rect x="2" y="1" width="1" height="1" fill="#000000"/><rect x="3" y="1" width="1" height="1" fill="#ffff00"/><rect x="4" y="1" width="1" height="1" fill="#ffffff"/><rect x="5" y="1" width="1" height="1" fill="#ffff00"/><rect x="6" y="1" width="7" height="1" fill="#000000"/><rect x="2" y="2" width="1" height="1" fill="#000000"/><rect x="3" y="2" width="1" height="1" fill="#ffffff"/><rect x="4" y="2" width="1" height="1" fill="#ffff00"/><rect x="5" y="2" width="1" height="1" fill="#ffffff"/><rect x="6" y="2" width="1" height="1" fill="#ffff00"/><rect x="7" y="2" width="1" height="1" fill="#ffffff"/><rect x="8" y="2" width="1" height="1" fill="#ffff00"/><rect x="9" y="2" width="1" height="1" fill="#ffffff"/><rect x="10" y="2" width="1" height="1" fill="#ffff00"/><rect x="11" y="2" width="1" height="1" fill="#ffffff"/><rect x="12" y="2" width="1" height="1" fill="#000000"/><rect x="2" y="3" width="1" height="1" fill="#000000"/><rect x="3" y="3" width="1" height="1" fill="#ffff00"/><rect x="4" y="3" width="1" height="1" fill="#ffffff"/><rect x="5" y="3" width="1" height="1" fill="#ffff00"/><rect x="6" y="3" width="1" height="1" fill="#ffffff"/><rect x="7" y="3" width="1" height="1" fill="#ffff00"/><rect x="8" y="3" width="1" height="1" fill="#ffffff"/><rect x="9" y="3" width="1" height="1" fill="#ffff00"/><rect x="10" y="3" width="1" height="1" fill="#ffffff"/><rect x="11" y="3" width="1" height="1" fill="#ffff00"/><rect x="12" y="3" width="1" height="1" fill="#000000"/><rect x="2" y="4" width="1" height="1" fill="#000000"/><rect x="3" y="4" width="1" height="1" fill="#ffffff"/><rect x="4" y="4" width="1" height="1" fill="#ffff00"/><rect x="5" y="4" width="1" height="1" fill="#ffffff"/><rect x="6" y="4" width="1" height="1" fill="#ffff00"/><rect x="7" y="4" width="11" height="1" fill="#000000"/><rect x="2" y="5" width="1" height="1" fill="#000000"/><rect x="3" y="5" width="1" height="1" fill="#ffff00"/><rect x="4" y="5" width="1" height="1" fill="#ffffff"/><rect x="5" y="5" width="1" height="1" fill="#ffff00"/><rect x="6" y="5" width="1" height="1" fill="#000000"/><rect x="7" y="5" width="9" height="1" fill="#808000"/><rect x="16" y="5" width="1" height="1" fill="#000000"/><rect x="2" y="6" width="1" height="1" fill="#000000"/><rect x="3" y="6" width="1" height="1" fill="#ffffff"/><rect x="4" y="6" width="1" height="1" fill="#ffff00"/><rect x="5" y="6" width="1" height="1" fill="#000000"/><rect x="6" y="6" width="9" height="1" fill="#808000"/><rect x="15" y="6" width="1" height="1" fill="#000000"/><rect x="2" y="7" width="1" height="1" fill="#000000"/><rect x="3" y="7" width="1" height="1" fill="#ffff00"/><rect x="4" y="7" width="1" height="1" fill="#000000"/><rect x="5" y="7" width="9" height="1" fill="#808000"/><rect x="14" y="7" width="1" height="1" fill="#000000"/><rect x="2" y="8" width="2" height="1" fill="#000000"/><rect x="4" y="8" width="9" height="1" fill="#808000"/><rect x="13" y="8" width="1" height="1" fill="#000000"/><rect x="2" y="9" width="11" height="1" fill="#000000"/></svg>
<svg style="left:83px;top:52px" width="18" height="6" shape-rendering="crispEdges"><rect x="13" y="0" width="2" height="1" fill="#0000ff"/><rect x="13" y="1" width="2" height="1" fill="#0000ff"/><rect x="11" y="2" width="6" height="1" fill="#0000ff"/><rect x="11" y="3" width="6" height="1" fill="#0000ff"/><rect x="13" y="4" width="2" height="1" fill="#0000ff"/><rect x="13" y="5" width="2" height="1" fill="#0000ff"/></svg>
<svg style="left:118px;top:53px" width="14" height="14" shape-rendering="crispEdges"><rect x="0" y="0" width="14" height="1" fill="#000000"/><rect x="0" y="1" width="1" height="1" fill="#000000"/><rect x="1" y="1" width="1" height="1" fill="#808000"/><rect x="2" y="1" width="1" height="1" fill="#000000"/><rect x="3" y="1" width="8" height="1" fill="#ffffff"/><rect x="11" y="1" width="1" height="1" fill="#000000"/><rect x="12" y="1" width="1" height="1" fill="#ffffff"/><rect x="13" y="1" width="1" height="1" fill="#000000"/><rect x="0" y="2" width="1" height="1" fill="#000000"/><rect x="1" y="2" width="1" height="1" fill="#808000"/><rect x="2" y="2" width="1" height="1" fill="#000000"/><rect x="3" y="2" width="1" height="1" fill="#ffffff"/><rect x="4" y="2" width="6" height="1" fill="#d4d0c8"/><rect x="10" y="2" width="1" height="1" fill="#ffffff"/><rect x="11" y="2" width="3" height="1" fill="#000000"/><rect x="0" y="3" width="1" height="1" fill="#000000"/><rect x="1" y="3" width="1" height="1" fill="#808000"/><rect x="2" y="3" width="1" height="1" fill="#000000"/><rect x="3" y="3" width="1" height="1" fill="#ffffff"/><rect x="4" y="3" width="6" height="1" fill="#d4d0c8"/><rect x="10" y="3" width="1" height="1" fill="#ffffff"/><rect x="11" y="3" width="1" height="1" fill="#000000"/><rect x="12" y="3" width="1" height="1" fill="#808000"/><rect x="13" y="3" width="1" height="1" fill="#000000"/><rect x="0" y="4" width="1" height="1" fill="#000000"/><rect x="1" y="4" width="1" height="1" fill="#808000"/><rect x="2" y="4" width="1" height="1" fill="#000000"/><rect x="3" y="4" width="1" height="1" fill="#ffffff"/><rect x="4" y="4" width="6" height="1" fill="#d4d0c8"/><rect x="10" y="4" width="1" height="1" fill="#ffffff"/><rect x="11" y="4" width="1" height="1" fill="#000000"/><rect x="12" y="4" width="1" height="1" fill="#808000"/><rect x="13" y="4" width="1" height="1" fill="#000000"/><rect x="0" y="5" width="1" height="1" fill="#000000"/><rect x="1" y="5" width="1" height="1" fill="#808000"/><rect x="2" y="5" width="1" height="1" fill="#000000"/><rect x="3" y="5" width="1" height="1" fill="#ffffff"/><rect x="4" y="5" width="6" height="1" fill="#d4d0c8"/><rect x="10" y="5" width="1" height="1" fill="#ffffff"/><rect x="11" y="5" width="1" height="1" fill="#000000"/><rect x="12" y="5" width="1" height="1" fill="#808000"/><rect x="13" y="5" width="1" height="1" fill="#000000"/><rect x="0" y="6" width="1" height="1" fill="#000000"/><rect x="1" y="6" width="1" height="1" fill="#808000"/><rect x="2" y="6" width="1" height="1" fill="#000000"/><rect x="3" y="6" width="8" height="1" fill="#ffffff"/><rect x="11" y="6" width="1" height="1" fill="#000000"/><rect x="12" y="6" width="1" height="1" fill="#808000"/><rect x="13" y="6" width="1" height="1" fill="#000000"/><rect x="0" y="7" width="1" height="1" fill="#000000"/><rect x="1" y="7" width="1" height="1" fill="#808000"/><rect x="2" y="7" width="10" height="1" fill="#000000"/><rect x="12" y="7" width="1" height="1" fill="#808000"/><rect x="13" y="7" width="1" height="1" fill="#000000"/><rect x="0" y="8" width="1" height="1" fill="#000000"/><rect x="1" y="8" width="12" height="1" fill="#808000"/><rect x="13" y="8" width="1" height="1" fill="#000000"/><rect x="0" y="9" width="1" height="1" fill="#000000"/><rect x="1" y="9" width="1" height="1" fill="#808000"/><rect x="2" y="9" width="10" height="1" fill="#000000"/><rect x="12" y="9" width="1" height="1" fill="#808000"/><rect x="13" y="9" width="1" height="1" fill="#000000"/><rect x="0" y="10" width="1" height="1" fill="#000000"/><rect x="1" y="10" width="1" height="1" fill="#808000"/><rect x="2" y="10" width="7" height="1" fill="#000000"/><rect x="9" y="10" width="2" height="1" fill="#ffffff"/><rect x="11" y="10" width="1" height="1" fill="#000000"/><rect x="12" y="10" width="1" height="1" fill="#808000"/><rect x="13" y="10" width="1" height="1" fill="#000000"/><rect x="0" y="11" width="1" height="1" fill="#000000"/><rect x="1" y="11" width="1" height="1" fill="#808000"/><rect x="2" y="11" width="7" height="1" fill="#000000"/><rect x="9" y="11" width="2" height="1" fill="#ffffff"/><rect x="11" y="11" width="1" height="1" fill="#000000"/><rect x="12" y="11" width="1" height="1" fill="#808000"/><rect x="13" y="11" width="1" height="1" fill="#000000"/><rect x="0" y="12" width="1" height="1" fill="#000000"/><rect x="1" y="12" width="1" height="1" fill="#808000"/><rect x="2" y="12" width="7" height="1" fill="#000000"/><rect x="9" y="12" width="2" height="1" fill="#ffffff"/><rect x="11" y="12" width="1" height="1" fill="#000000"/><rect x="12" y="12" width="1" height="1" fill="#808000"/><rect x="13" y="12" width="1" height="1" fill="#000000"/><rect x="0" y="13" width="14" height="1" fill="#000000"/></svg>
<svg style="left:150px;top:54px" width="14" height="14" shape-rendering="crispEdges"><rect x="0" y="0" width="14" height="1" fill="#000000"/><rect x="0" y="1" width="1" height="1" fill="#000000"/><rect x="1" y="1" width="1" height="1" fill="#808000"/><rect x="2" y="1" width="1" height="1" fill="#000000"/><rect x="3" y="1" width="8" height="1" fill="#ffffff"/><rect x="11" y="1" width="1" height="1" fill="#000000"/><rect x="12" y="1" width="1" height="1" fill="#ffffff"/><rect x="13" y="1" width="1" height="1" fill="#000000"/><rect x="0" y="2" width="1" height="1" fill="#000000"/><rect x="1" y="2" width="1" height="1" fill="#808000"/><rect x="2" y="2" width="1" height="1" fill="#000000"/><rect x="3" y="2" width="1" height="1" fill="#ffffff"/><rect x="4" y="2" width="6" height="1" fill="#d4d0c8"/><rect x="10" y="2" width="1" height="1" fill="#ffffff"/><rect x="11" y="2" width="3" height="1" fill="#000000"/><rect x="0" y="3" width="1" height="1" fill="#000000"/><rect x="1" y="3" width="1" height="1" fill="#808000"/><rect x="2" y="3" width="1" height="1" fill="#000000"/><rect x="3" y="3" width="1" height="1" fill="#ffffff"/><rect x="4" y="3" width="6" height="1" fill="#d4d0c8"/><rect x="10" y="3" width="1" height="1" fill="#ffffff"/><rect x="11" y="3" width="1" height="1" fill="#000000"/><rect x="12" y="3" width="1" height="1" fill="#808000"/><rect x="13" y="3" width="1" height="1" fill="#000000"/><rect x="0" y="4" width="1" height="1" fill="#000000"/><rect x="1" y="4" width="1" height="1" fill="#808000"/><rect x="2" y="4" width="1" height="1" fill="#000000"/><rect x="3" y="4" width="1" height="1" fill="#ffffff"/><rect x="4" y="4" width="6" height="1" fill="#d4d0c8"/><rect x="10" y="4" width="1" height="1" fill="#ffffff"/><rect x="11" y="4" width="1" height="1" fill="#000000"/><rect x="12" y="4" width="1" height="1" fill="#808000"/><rect x="13" y="4" width="1" height="1" fill="#000000"/><rect x="0" y="5" width="1" height="1" fill="#000000"/><rect x="1" y="5" width="1" height="1" fill="#808000"/><rect x="2" y="5" width="1" height="1" fill="#000000"/><rect x="3" y="5" width="1" height="1" fill="#ffffff"/><rect x="4" y="5" width="6" height="1" fill="#d4d0c8"/><rect x="10" y="5" width="1" height="1" fill="#ffffff"/><rect x="11" y="5" width="1" height="1" fill="#000000"/><rect x="12" y="5" width="1" height="1" fill="#808000"/><rect x="13" y="5" width="1" height="1" fill="#000000"/><rect x="0" y="6" width="1" height="1" fill="#000000"/><rect x="1" y="6" width="1" height="1" fill="#808000"/><rect x="2" y="6" width="1" height="1" fill="#000000"/><rect x="3" y="6" width="8" height="1" fill="#ffffff"/><rect x="11" y="6" width="1" height="1" fill="#000000"/><rect x="12" y="6" width="1" height="1" fill="#808000"/><rect x="13" y="6" width="1" height="1" fill="#000000"/><rect x="0" y="7" width="1" height="1" fill="#000000"/><rect x="1" y="7" width="1" height="1" fill="#808000"/><rect x="2" y="7" width="10" height="1" fill="#000000"/><rect x="12" y="7" width="1" height="1" fill="#808000"/><rect x="13" y="7" width="1" height="1" fill="#000000"/><rect x="0" y="8" width="1" height="1" fill="#000000"/><rect x="1" y="8" width="12" height="1" fill="#808000"/><rect x="13" y="8" width="1" height="1" fill="#000000"/><rect x="0" y="9" width="1" height="1" fill="#000000"/><rect x="1" y="9" width="1" height="1" fill="#808000"/><rect x="2" y="9" width="10" height="1" fill="#000000"/><rect x="12" y="9" width="1" height="1" fill="#808000"/><rect x="13" y="9" width="1" height="1" fill="#000000"/><rect x="0" y="10" width="1" height="1" fill="#000000"/><rect x="1" y="10" width="1" height="1" fill="#808000"/><rect x="2" y="10" width="7" height="1" fill="#000000"/><rect x="9" y="10" width="2" height="1" fill="#ffffff"/><rect x="11" y="10" width="1" height="1" fill="#000000"/><rect x="12" y="10" width="1" height="1" fill="#808000"/><rect x="13" y="10" width="1" height="1" fill="#000000"/><rect x="0" y="11" width="1" height="1" fill="#000000"/><rect x="1" y="11" width="1" height="1" fill="#808000"/><rect x="2" y="11" width="7" height="1" fill="#000000"/><rect x="9" y="11" width="2" height="1" fill="#ffffff"/><rect x="11" y="11" width="1" height="1" fill="#000000"/><rect x="12" y="11" width="1" height="1" fill="#808000"/><rect x="13" y="11" width="1" height="1" fill="#000000"/><rect x="0" y="12" width="1" height="1" fill="#000000"/><rect x="1" y="12" width="1" height="1" fill="#808000"/><rect x="2" y="12" width="7" height="1" fill="#000000"/><rect x="9" y="12" width="2" height="1" fill="#ffffff"/><rect x="11" y="12" width="1" height="1" fill="#000000"/><rect x="12" y="12" width="1" height="1" fill="#808000"/><rect x="13" y="12" width="1" height="1" fill="#000000"/><rect x="0" y="13" width="14" height="1" fill="#000000"/></svg>
<svg style="left:152px;top:52px" width="11" height="7" shape-rendering="crispEdges"><rect x="2" y="0" width="9" height="1" fill="#000000"/><rect x="2" y="1" width="1" height="1" fill="#000000"/><rect x="3" y="1" width="1" height="1" fill="#00ffff"/><rect x="4" y="1" width="2" height="1" fill="#ffffff"/><rect x="6" y="1" width="1" height="1" fill="#c0c0c0"/><rect x="7" y="1" width="1" height="1" fill="#ffffff"/><rect x="8" y="1" width="1" height="1" fill="#008080"/><rect x="9" y="1" width="1" height="1" fill="#000000"/><rect x="2" y="2" width="1" height="1" fill="#000000"/><rect x="3" y="2" width="1" height="1" fill="#ffffff"/><rect x="4" y="2" width="1" height="1" fill="#008080"/><rect x="5" y="2" width="3" height="1" fill="#ffffff"/><rect x="8" y="2" width="1" height="1" fill="#008080"/><rect x="9" y="2" width="2" height="1" fill="#000000"/><rect x="3" y="3" width="1" height="1" fill="#000000"/><rect x="4" y="3" width="1" height="1" fill="#008080"/><rect x="5" y="3" width="2" height="1" fill="#ffffff"/><rect x="7" y="3" width="1" height="1" fill="#008080"/><rect x="8" y="3" width="1" height="1" fill="#000000"/><rect x="4" y="4" width="1" height="1" fill="#000000"/><rect x="5" y="4" width="1" height="1" fill="#008080"/><rect x="6" y="4" width="1" height="1" fill="#ffffff"/><rect x="7" y="4" width="1" height="1" fill="#000000"/><rect x="4" y="5" width="1" height="1" fill="#000000"/><rect x="5" y="5" width="2" height="1" fill="#008080"/><rect x="7" y="5" width="1" height="1" fill="#000000"/><rect x="4" y="6" width="4" height="1" fill="#000000"/></svg>
<div class="a" style="left:180px;top:50px;width:1px;height:25px;background:#808080;"></div>
<div class="a" style="left:181px;top:50px;width:1px;height:25px;background:#fff;"></div>
<div class="a" style="left:260px;top:50px;width:1px;height:25px;background:#808080;"></div>
<div class="a" style="left:261px;top:50px;width:1px;height:25px;background:#fff;"></div>
<svg style="left:198px;top:53px" width="16" height="13" shape-rendering="crispEdges"><rect x="0" y="1" width="5" height="1" fill="#000000"/><rect x="9" y="1" width="1" height="1" fill="#808080"/><rect x="10" y="1" width="2" height="1" fill="#ffffff"/><rect x="12" y="1" width="1" height="1" fill="#ffff00"/><rect x="13" y="1" width="1" height="1" fill="#000000"/><rect x="8" y="2" width="1" height="1" fill="#808080"/><rect x="9" y="2" width="2" height="1" fill="#ffffff"/><rect x="11" y="2" width="2" height="1" fill="#ffff00"/><rect x="13" y="2" width="1" height="1" fill="#000000"/><rect x="0" y="3" width="5" height="1" fill="#000000"/><rect x="8" y="3" width="1" height="1" fill="#808080"/><rect x="9" y="3" width="1" height="1" fill="#ffffff"/><rect x="10" y="3" width="2" height="1" fill="#ffff00"/><rect x="12" y="3" width="1" height="1" fill="#000000"/><rect x="8" y="4" width="1" height="1" fill="#808080"/><rect x="9" y="4" width="1" height="1" fill="#ffffff"/><rect x="10" y="4" width="2" height="1" fill="#ffff00"/><rect x="12" y="4" width="1" height="1" fill="#000000"/><rect x="0" y="5" width="4" height="1" fill="#000000"/><rect x="7" y="5" width="1" height="1" fill="#808080"/><rect x="8" y="5" width="1" height="1" fill="#ffffff"/><rect x="9" y="5" width="2" height="1" fill="#ffff00"/><rect x="11" y="5" width="1" height="1" fill="#000000"/><rect x="7" y="6" width="1" height="1" fill="#ffffff"/><rect x="8" y="6" width="5" height="1" fill="#ffff00"/><rect x="13" y="6" width="2" height="1" fill="#000000"/><rect x="0" y="7" width="5" height="1" fill="#000000"/><rect x="6" y="7" width="4" height="1" fill="#000000"/><rect x="10" y="7" width="2" height="1" fill="#ffff00"/><rect x="12" y="7" width="2" height="1" fill="#000000"/><rect x="8" y="8" width="1" height="1" fill="#ffffff"/><rect x="9" y="8" width="2" height="1" fill="#ffff00"/><rect x="11" y="8" width="1" height="1" fill="#000000"/><rect x="0" y="9" width="4" height="1" fill="#000000"/><rect x="8" y="9" width="2" height="1" fill="#ffff00"/><rect x="10" y="9" width="1" height="1" fill="#000000"/><rect x="7" y="10" width="2" height="1" fill="#ffff00"/><rect x="9" y="10" width="1" height="1" fill="#000000"/><rect x="0" y="11" width="5" height="1" fill="#000000"/><rect x="7" y="11" width="1" height="1" fill="#ffff00"/><rect x="8" y="11" width="1" height="1" fill="#000000"/><rect x="7" y="12" width="2" height="1" fill="#000000"/></svg>
<svg style="left:226px;top:51px" width="19" height="16" shape-rendering="crispEdges"><rect x="13" y="2" width="2" height="1" fill="#0000ff"/><rect x="16" y="2" width="3" height="1" fill="#000000"/><rect x="12" y="3" width="1" height="1" fill="#0000ff"/><rect x="16" y="3" width="3" height="1" fill="#000000"/><rect x="4" y="4" width="4" height="1" fill="#ff0000"/><rect x="12" y="4" width="1" height="1" fill="#0000ff"/><rect x="3" y="5" width="2" height="1" fill="#ff0000"/><rect x="7" y="5" width="2" height="1" fill="#ff0000"/><rect x="12" y="5" width="1" height="1" fill="#0000ff"/><rect x="17" y="5" width="2" height="1" fill="#000000"/><rect x="3" y="6" width="2" height="1" fill="#ff0000"/><rect x="7" y="6" width="2" height="1" fill="#ff0000"/><rect x="12" y="6" width="1" height="1" fill="#0000ff"/><rect x="17" y="6" width="2" height="1" fill="#000000"/><rect x="6" y="7" width="2" height="1" fill="#ff0000"/><rect x="11" y="7" width="1" height="1" fill="#0000ff"/><rect x="5" y="8" width="2" height="1" fill="#ff0000"/><rect x="10" y="8" width="1" height="1" fill="#0000ff"/><rect x="17" y="8" width="2" height="1" fill="#000000"/><rect x="5" y="9" width="2" height="1" fill="#ff0000"/><rect x="11" y="9" width="1" height="1" fill="#0000ff"/><rect x="17" y="9" width="2" height="1" fill="#000000"/><rect x="5" y="10" width="1" height="1" fill="#ff0000"/><rect x="12" y="10" width="1" height="1" fill="#0000ff"/><rect x="12" y="11" width="1" height="1" fill="#0000ff"/><rect x="16" y="11" width="2" height="1" fill="#000000"/><rect x="5" y="12" width="2" height="1" fill="#ff0000"/><rect x="12" y="12" width="1" height="1" fill="#0000ff"/><rect x="16" y="12" width="2" height="1" fill="#000000"/><rect x="5" y="13" width="2" height="1" fill="#ff0000"/><rect x="12" y="13" width="1" height="1" fill="#0000ff"/><rect x="12" y="14" width="1" height="1" fill="#0000ff"/><rect x="16" y="14" width="3" height="1" fill="#000000"/><rect x="13" y="15" width="2" height="1" fill="#0000ff"/><rect x="16" y="15" width="3" height="1" fill="#000000"/></svg>
<svg style="left:276px;top:51px" width="17" height="17" shape-rendering="crispEdges"><rect x="5" y="1" width="5" height="1" fill="#000000"/><rect x="3" y="2" width="2" height="1" fill="#000000"/><rect x="5" y="2" width="5" height="1" fill="#ffff00"/><rect x="10" y="2" width="1" height="1" fill="#000000"/><rect x="2" y="3" width="1" height="1" fill="#000000"/><rect x="3" y="3" width="2" height="1" fill="#ffff00"/><rect x="5" y="3" width="2" height="1" fill="#000000"/><rect x="7" y="3" width="4" height="1" fill="#ffff00"/><rect x="11" y="3" width="1" height="1" fill="#000000"/><rect x="1" y="4" width="1" height="1" fill="#000000"/><rect x="2" y="4" width="3" height="1" fill="#ffff00"/><rect x="5" y="4" width="2" height="1" fill="#000000"/><rect x="7" y="4" width="4" height="1" fill="#ffff00"/><rect x="11" y="4" width="1" height="1" fill="#000000"/><rect x="1" y="5" width="1" height="1" fill="#000000"/><rect x="2" y="5" width="8" height="1" fill="#ffff00"/><rect x="10" y="5" width="1" height="1" fill="#000000"/><rect x="1" y="6" width="1" height="1" fill="#000000"/><rect x="2" y="6" width="8" height="1" fill="#ffff00"/><rect x="10" y="6" width="1" height="1" fill="#000000"/><rect x="1" y="7" width="2" height="1" fill="#000000"/><rect x="3" y="7" width="6" height="1" fill="#ffff00"/><rect x="9" y="7" width="1" height="1" fill="#000000"/><rect x="10" y="7" width="1" height="1" fill="#ffff00"/><rect x="11" y="7" width="1" height="1" fill="#000000"/><rect x="2" y="8" width="1" height="1" fill="#000000"/><rect x="3" y="8" width="5" height="1" fill="#ffff00"/><rect x="8" y="8" width="1" height="1" fill="#000000"/><rect x="9" y="8" width="3" height="1" fill="#ffff00"/><rect x="12" y="8" width="1" height="1" fill="#000000"/><rect x="3" y="9" width="5" height="1" fill="#000000"/><rect x="9" y="9" width="1" height="1" fill="#000000"/><rect x="10" y="9" width="3" height="1" fill="#ffff00"/><rect x="13" y="9" width="1" height="1" fill="#000000"/><rect x="10" y="10" width="1" height="1" fill="#000000"/><rect x="11" y="10" width="3" height="1" fill="#ffff00"/><rect x="14" y="10" width="1" height="1" fill="#000000"/><rect x="10" y="11" width="1" height="1" fill="#000000"/><rect x="11" y="11" width="4" height="1" fill="#ffff00"/><rect x="15" y="11" width="1" height="1" fill="#000000"/><rect x="11" y="12" width="1" height="1" fill="#000000"/><rect x="12" y="12" width="4" height="1" fill="#ffff00"/><rect x="16" y="12" width="1" height="1" fill="#000000"/><rect x="12" y="13" width="2" height="1" fill="#000000"/><rect x="14" y="13" width="2" height="1" fill="#ffff00"/><rect x="16" y="13" width="1" height="1" fill="#000000"/><rect x="13" y="14" width="1" height="1" fill="#000000"/><rect x="14" y="14" width="2" height="1" fill="#ffff00"/><rect x="16" y="14" width="1" height="1" fill="#000000"/><rect x="13" y="15" width="1" height="1" fill="#000000"/><rect x="14" y="15" width="2" height="1" fill="#ffff00"/><rect x="16" y="15" width="1" height="1" fill="#000000"/><rect x="13" y="16" width="4" height="1" fill="#000000"/></svg>
<svg style="left:307px;top:50px" width="19" height="18" shape-rendering="crispEdges"><rect x="5" y="2" width="3" height="1" fill="#000000"/><rect x="4" y="3" width="1" height="1" fill="#000000"/><rect x="5" y="3" width="3" height="1" fill="#ffffff"/><rect x="8" y="3" width="7" height="1" fill="#000000"/><rect x="4" y="4" width="1" height="1" fill="#000000"/><rect x="5" y="4" width="10" height="1" fill="#ffffff"/><rect x="15" y="4" width="1" height="1" fill="#000000"/><rect x="4" y="5" width="1" height="1" fill="#000000"/><rect x="5" y="5" width="1" height="1" fill="#ffffff"/><rect x="6" y="5" width="3" height="1" fill="#000000"/><rect x="9" y="5" width="1" height="1" fill="#ffffff"/><rect x="10" y="5" width="2" height="1" fill="#000000"/><rect x="12" y="5" width="4" height="1" fill="#ffffff"/><rect x="16" y="5" width="1" height="1" fill="#000000"/><rect x="2" y="6" width="1" height="1" fill="#000000"/><rect x="3" y="6" width="1" height="1" fill="#ff0000"/><rect x="4" y="6" width="1" height="1" fill="#000000"/><rect x="5" y="6" width="10" height="1" fill="#ffffff"/><rect x="15" y="6" width="1" height="1" fill="#000000"/><rect x="16" y="6" width="1" height="1" fill="#ff0000"/><rect x="17" y="6" width="1" height="1" fill="#000000"/><rect x="2" y="7" width="1" height="1" fill="#000000"/><rect x="3" y="7" width="1" height="1" fill="#ff0000"/><rect x="4" y="7" width="1" height="1" fill="#000000"/><rect x="5" y="7" width="10" height="1" fill="#ffffff"/><rect x="15" y="7" width="1" height="1" fill="#000000"/><rect x="16" y="7" width="1" height="1" fill="#ff0000"/><rect x="17" y="7" width="1" height="1" fill="#000000"/><rect x="2" y="8" width="4" height="1" fill="#000000"/><rect x="6" y="8" width="1" height="1" fill="#ffffff"/><rect x="7" y="8" width="5" height="1" fill="#000000"/><rect x="12" y="8" width="3" height="1" fill="#ffffff"/><rect x="15" y="8" width="3" height="1" fill="#000000"/><rect x="3" y="9" width="1" height="1" fill="#000000"/><rect x="4" y="9" width="9" height="1" fill="#ffffff"/><rect x="13" y="9" width="1" height="1" fill="#000000"/><rect x="14" y="9" width="1" height="1" fill="#ffffff"/><rect x="15" y="9" width="1" height="1" fill="#000000"/><rect x="16" y="9" width="1" height="1" fill="#808080"/><rect x="17" y="9" width="1" height="1" fill="#000000"/><rect x="4" y="10" width="1" height="1" fill="#000000"/><rect x="5" y="10" width="8" height="1" fill="#ffffff"/><rect x="13" y="10" width="1" height="1" fill="#000000"/><rect x="14" y="10" width="2" height="1" fill="#ffffff"/><rect x="16" y="10" width="1" height="1" fill="#808080"/><rect x="17" y="10" width="1" height="1" fill="#000000"/><rect x="4" y="11" width="1" height="1" fill="#000000"/><rect x="5" y="11" width="1" height="1" fill="#ffffff"/><rect x="6" y="11" width="2" height="1" fill="#000000"/><rect x="8" y="11" width="1" height="1" fill="#ffffff"/><rect x="9" y="11" width="2" height="1" fill="#000000"/><rect x="11" y="11" width="2" height="1" fill="#ffffff"/><rect x="13" y="11" width="1" height="1" fill="#000000"/><rect x="14" y="11" width="1" height="1" fill="#ffffff"/><rect x="15" y="11" width="1" height="1" fill="#000000"/><rect x="16" y="11" width="1" height="1" fill="#808080"/><rect x="17" y="11" width="1" height="1" fill="#000000"/><rect x="2" y="12" width="2" height="1" fill="#000000"/><rect x="4" y="12" width="10" height="1" fill="#ffffff"/><rect x="14" y="12" width="1" height="1" fill="#000000"/><rect x="15" y="12" width="1" height="1" fill="#ffffff"/><rect x="16" y="12" width="1" height="1" fill="#000000"/><rect x="17" y="12" width="1" height="1" fill="#808080"/><rect x="18" y="12" width="1" height="1" fill="#000000"/><rect x="2" y="13" width="1" height="1" fill="#000000"/><rect x="3" y="13" width="1" height="1" fill="#ffffff"/><rect x="4" y="13" width="10" height="1" fill="#000000"/><rect x="14" y="13" width="1" height="1" fill="#ffffff"/><rect x="15" y="13" width="1" height="1" fill="#000000"/><rect x="16" y="13" width="1" height="1" fill="#ffffff"/><rect x="17" y="13" width="1" height="1" fill="#808080"/><rect x="18" y="13" width="1" height="1" fill="#000000"/><rect x="2" y="14" width="1" height="1" fill="#000000"/><rect x="3" y="14" width="1" height="1" fill="#808080"/><rect x="4" y="14" width="9" height="1" fill="#ffffff"/><rect x="13" y="14" width="3" height="1" fill="#000000"/><rect x="16" y="14" width="1" height="1" fill="#808080"/><rect x="17" y="14" width="1" height="1" fill="#000000"/><rect x="2" y="15" width="1" height="1" fill="#000000"/><rect x="3" y="15" width="1" height="1" fill="#808080"/><rect x="4" y="15" width="12" height="1" fill="#000000"/><rect x="16" y="15" width="1" height="1" fill="#808080"/><rect x="17" y="15" width="1" height="1" fill="#000000"/><rect x="3" y="16" width="1" height="1" fill="#000000"/><rect x="4" y="16" width="12" height="1" fill="#808080"/><rect x="16" y="16" width="1" height="1" fill="#000000"/><rect x="3" y="17" width="14" height="1" fill="#000000"/></svg>
<svg style="left:762px;top:601px" width="12" height="12" shape-rendering="crispEdges"><rect x="11" y="0" width="1" height="1" fill="#ffffff"/><rect x="10" y="1" width="1" height="1" fill="#ffffff"/><rect x="11" y="1" width="1" height="1" fill="#808080"/><rect x="9" y="2" width="1" height="1" fill="#ffffff"/><rect x="10" y="2" width="2" height="1" fill="#808080"/><rect x="8" y="3" width="1" height="1" fill="#ffffff"/><rect x="9" y="3" width="2" height="1" fill="#808080"/><rect x="7" y="4" width="1" height="1" fill="#ffffff"/><rect x="8" y="4" width="2" height="1" fill="#808080"/><rect x="11" y="4" width="1" height="1" fill="#ffffff"/><rect x="6" y="5" width="1" height="1" fill="#ffffff"/><rect x="7" y="5" width="2" height="1" fill="#808080"/><rect x="10" y="5" width="1" height="1" fill="#ffffff"/><rect x="11" y="5" width="1" height="1" fill="#808080"/><rect x="5" y="6" width="1" height="1" fill="#ffffff"/><rect x="6" y="6" width="2" height="1" fill="#808080"/><rect x="9" y="6" width="1" height="1" fill="#ffffff"/><rect x="10" y="6" width="2" height="1" fill="#808080"/><rect x="4" y="7" width="1" height="1" fill="#ffffff"/><rect x="5" y="7" width="2" height="1" fill="#808080"/><rect x="8" y="7" width="1" height="1" fill="#ffffff"/><rect x="9" y="7" width="2" height="1" fill="#808080"/><rect x="3" y="8" width="1" height="1" fill="#ffffff"/><rect x="4" y="8" width="2" height="1" fill="#808080"/><rect x="7" y="8" width="1" height="1" fill="#ffffff"/><rect x="8" y="8" width="2" height="1" fill="#808080"/><rect x="11" y="8" width="1" height="1" fill="#ffffff"/><rect x="2" y="9" width="1" height="1" fill="#ffffff"/><rect x="3" y="9" width="2" height="1" fill="#808080"/><rect x="6" y="9" width="1" height="1" fill="#ffffff"/><rect x="7" y="9" width="2" height="1" fill="#808080"/><rect x="10" y="9" width="1" height="1" fill="#ffffff"/><rect x="11" y="9" width="1" height="1" fill="#808080"/><rect x="1" y="10" width="1" height="1" fill="#ffffff"/><rect x="2" y="10" width="2" height="1" fill="#808080"/><rect x="5" y="10" width="1" height="1" fill="#ffffff"/><rect x="6" y="10" width="2" height="1" fill="#808080"/><rect x="9" y="10" width="1" height="1" fill="#ffffff"/><rect x="10" y="10" width="2" height="1" fill="#808080"/><rect x="0" y="11" width="1" height="1" fill="#ffffff"/><rect x="1" y="11" width="2" height="1" fill="#808080"/><rect x="4" y="11" width="1" height="1" fill="#ffffff"/><rect x="5" y="11" width="2" height="1" fill="#808080"/><rect x="8" y="11" width="1" height="1" fill="#ffffff"/><rect x="9" y="11" width="2" height="1" fill="#808080"/></svg>
<div class="a" style="left:0px;top:3px;width:1px;height:1px;background:#000;"></div>
<div class="a" style="left:386px;top:618px;width:7px;height:1px;background:#222"></div>
</body></html>
